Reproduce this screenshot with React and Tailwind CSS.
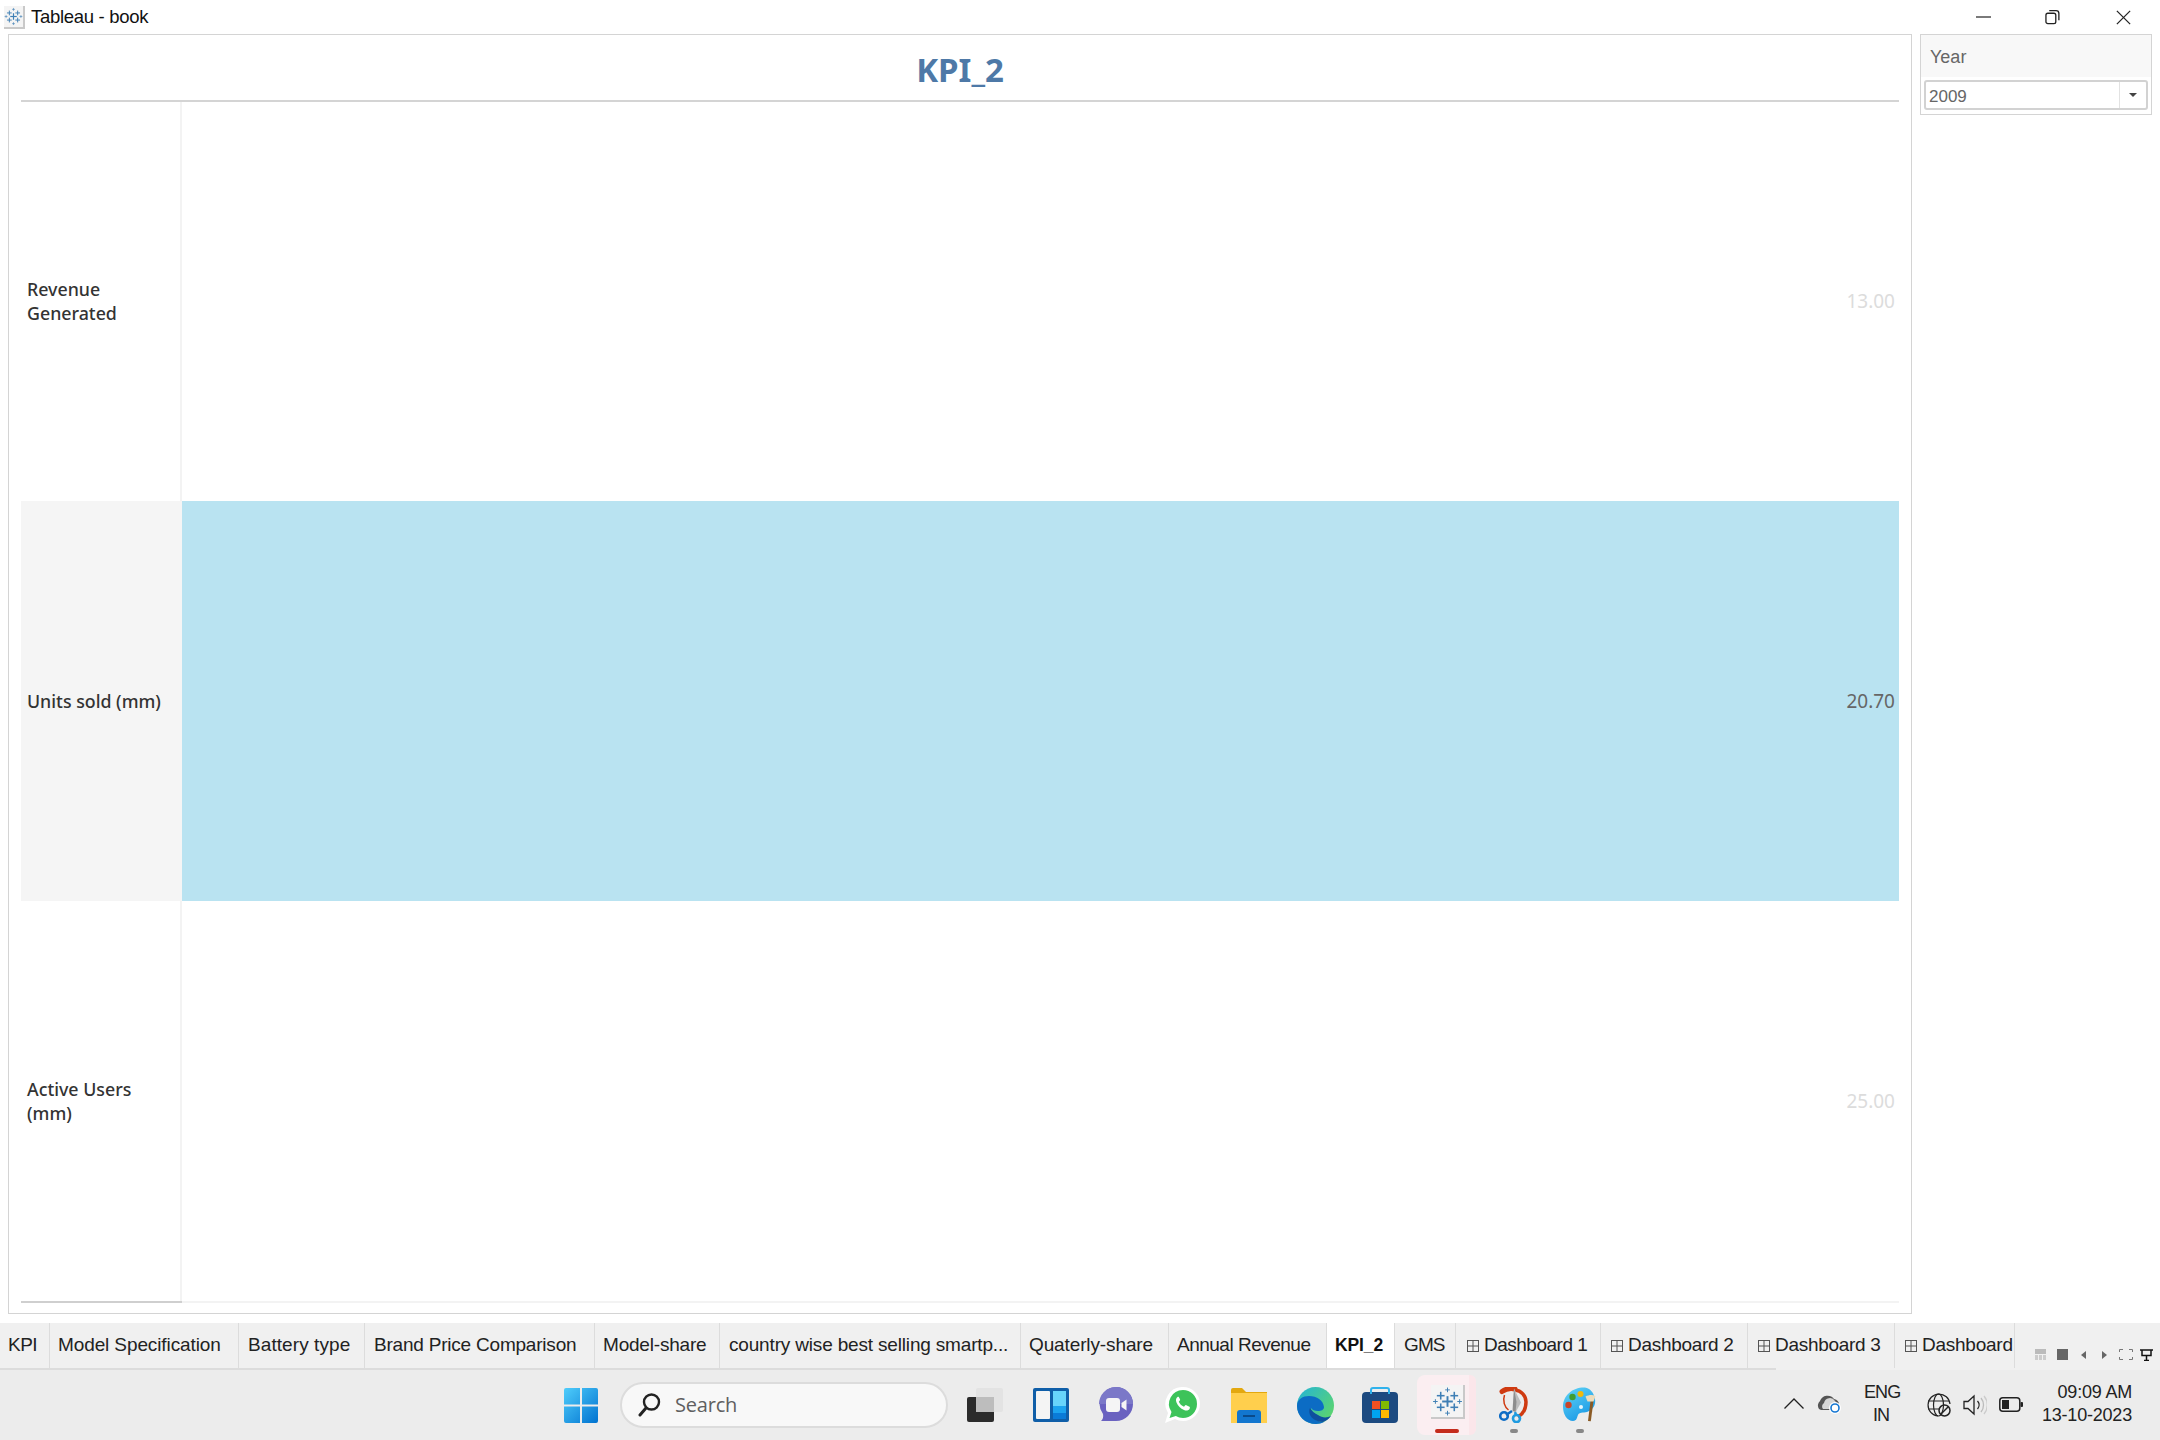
import React from "react";

const TableauMark = ({ size = 26, color = "#3f7fb5" }) => {
  const c = (x, y, r, w) => (
    <g key={`${x}-${y}`} stroke={color} strokeWidth={w}>
      <line x1={x - r} y1={y} x2={x + r} y2={y} />
      <line x1={x} y1={y - r} x2={x} y2={y + r} />
    </g>
  );
  return (
    <svg width={size} height={size} viewBox="0 0 32 32">
      {c(16, 16, 5.5, 2)}
      {c(9, 10, 4, 1.6)}
      {c(23, 10, 4, 1.6)}
      {c(9, 22, 4, 1.6)}
      {c(23, 22, 4, 1.6)}
      {c(16, 4, 2.4, 1)}
      {c(16, 28, 2.4, 1)}
      {c(3.5, 16, 2.4, 1)}
      {c(28.5, 16, 2.4, 1)}
    </svg>
  );
};

const Tile = ({ cls, children }) => (
  <div className={`flex items-center justify-center bg-[#f4f4f4] border-r-2 border-b-2 border-[#c9c9c9] ${cls}`}>
    {children}
  </div>
);

const DashIcon = () => (
  <svg width="12" height="12" viewBox="0 0 12 12" className="shrink-0 mr-[5px]" fill="none" stroke="#555" strokeWidth="1">
    <rect x="0.5" y="0.5" width="11" height="11" />
    <line x1="6" y1="0" x2="6" y2="12" />
    <line x1="0" y1="6" x2="12" y2="6" />
  </svg>
);

const tabs = [
  { t: "KPI", w: 50, p: 8, c: "tracking-[-0.5px]" },
  { t: "Model Specification", w: 189, p: 8, c: "tracking-[-0.11px]" },
  { t: "Battery type", w: 126, p: 9, c: "tracking-[0.08px]" },
  { t: "Brand Price Comparison", w: 230, p: 9, c: "tracking-[-0.21px]" },
  { t: "Model-share", w: 125, p: 8, c: "tracking-[-0.2px]" },
  { t: "country wise best selling smartp...", w: 301, p: 9, c: "tracking-[-0.17px]" },
  { t: "Quaterly-share", w: 148, p: 8, c: "tracking-[-0.12px]" },
  { t: "Annual Revenue", w: 158, p: 8, c: "tracking-[-0.5px]" },
  { t: "KPI_2", w: 68, p: 8, active: true, c: "tracking-[-0.1px]" },
  { t: "GMS", w: 61, p: 9, c: "tracking-[-0.9px]" },
  { t: "Dashboard 1", w: 145, p: 11, d: true, c: "tracking-[-0.5px]" },
  { t: "Dashboard 2", w: 147, p: 10, d: true, c: "tracking-[-0.3px]" },
  { t: "Dashboard 3", w: 147, p: 10, d: true, c: "tracking-[-0.3px]" },
  { t: "Dashboard", w: 120, p: 10, d: true, c: "tracking-[-0.25px]" },
];

const Row = ({ label, value, highlight, h }) => (
  <div className="flex" style={{ height: h }}>
    <div
      className={`w-[161px] shrink-0 flex items-center pl-[6px] pr-2 pb-[1px] text-[17.8px] leading-[24px] font-medium text-[#333] font-['Noto_Sans',sans-serif] ${
        highlight ? "bg-[#f5f5f5]" : "border-r-2 border-[#f3f3f3]"
      }`}
    >
      <div className={highlight ? "" : "w-[110px]"}>{label}</div>
    </div>
    <div
      className={`flex-1 flex items-center justify-end pr-[4px] text-[19px] font-['Noto_Sans',sans-serif] ${
        highlight ? "bg-[#b9e3f1] text-[#666]" : "text-[#dcdcdc]"
      }`}
    >
      {value}
    </div>
  </div>
);

export default function App() {
  return (
    <div className="w-[2160px] h-[1440px] flex flex-col bg-white overflow-hidden font-['Liberation_Sans',sans-serif]">
      {/* title bar */}
      <div className="h-[34px] shrink-0 flex items-center">
        <Tile cls="ml-[4px] w-[21px] h-[23px]">
          <TableauMark size={19} />
        </Tile>
        <span className="ml-[6px] text-[18.5px] tracking-[-0.3px] text-[#111]">Tableau - book</span>
        <div className="ml-auto flex items-center">
          <svg width="15" height="16" viewBox="0 0 15 16" className="mr-[54px]">
            <line x1="0" y1="8" x2="15" y2="8" stroke="#222" strokeWidth="1.2" />
          </svg>
          <svg width="15" height="16" viewBox="0 0 16 16" className="mr-[56px]" fill="none" stroke="#222" strokeWidth="1.4">
            <rect x="1" y="4" width="10.5" height="11" rx="2" />
            <path d="M4.5 1.2h7.3a3 3 0 0 1 3 3v7.3" />
          </svg>
          <svg width="15" height="15" viewBox="0 0 17 17" className="mr-[29px]" stroke="#222" strokeWidth="1.4">
            <line x1="1" y1="1" x2="16" y2="16" />
            <line x1="16" y1="1" x2="1" y2="16" />
          </svg>
        </div>
      </div>

      {/* main */}
      <div className="h-[1289px] shrink-0 flex items-start pl-[8px]">
        <div className="w-[1904px] h-[1280px] border border-[#d4d4d4] pl-[12px] pr-[12px] flex flex-col">
          <div className="h-[67px] shrink-0 border-b-2 border-[#d4d4d4] flex items-center justify-center pt-[5px] text-[33px] font-bold text-[#4e79a7] font-['Noto_Sans',sans-serif]">
            KPI_2
          </div>
          <Row h={399} label="Revenue Generated" value="13.00" />
          <Row h={400} label="Units sold (mm)" value="20.70" highlight />
          <Row h={400} label="Active Users (mm)" value="25.00" />
          <div className="flex">
            <div className="w-[161px] h-[2px] bg-[#cfcfcf]" />
            <div className="flex-1 h-[2px] bg-[#f3f3f3]" />
          </div>
        </div>
        <div className="ml-[8px] w-[232px] h-[81px] border border-[#d4d4d4] flex flex-col">
          <div className="h-[42px] shrink-0 bg-[#f8f8f8] pl-[9px] pt-[5px] text-[18px] leading-[34px] text-[#666]">
            Year
          </div>
          <div className="mt-[3px] mx-[3px] h-[30px] flex border-2 border-[#d2d2d2] rounded-[3px] text-[17px] text-[#666]">
            <div className="flex-1 flex items-center pl-[3px] pt-[3px] border-r border-[#e2e2e2]">2009</div>
            <div className="w-[26px] flex items-center justify-center">
              <div className="w-0 h-0 border-l-[4px] border-r-[4px] border-t-[4px] border-l-transparent border-r-transparent border-t-[#444]" />
            </div>
          </div>
        </div>
      </div>

      {/* tab strip */}
      <div className="h-[47px] shrink-0 flex relative bg-[#f0f0f0]">
        <div className="flex">
          {tabs.map((t) => (
            <div
              key={t.t}
              style={{ width: t.w, paddingLeft: t.p }}
              className={`h-[45px] flex items-center whitespace-nowrap overflow-hidden border-r border-[#dcdcdc] ${t.c} ${
                t.active ? "bg-white font-bold text-[#111] text-[17.5px]" : "text-[#222] text-[19px]"
              }`}
            >
              {t.d && <DashIcon />}
              {t.t}
            </div>
          ))}
        </div>
        <div className="flex items-start pt-[26px] ml-[20px]">
          <svg width="11" height="11" viewBox="0 0 11 11" className="mr-[11px]">
            <rect width="11" height="5" fill="#bbb" />
            <rect y="6" width="3" height="5" fill="#ccc" />
            <rect x="4" y="6" width="3" height="5" fill="#ccc" />
            <rect x="8" y="6" width="3" height="5" fill="#ccc" />
          </svg>
          <div className="w-[11px] h-[11px] bg-[#666] mr-[13px]" />
          <div className="w-0 h-0 mt-[2px] border-y-[4px] border-y-transparent border-r-[5px] border-r-[#666] mr-[16px]" />
          <div className="w-0 h-0 mt-[2px] border-y-[4px] border-y-transparent border-l-[5px] border-l-[#666] mr-[12px]" />
          <svg width="14" height="11" viewBox="0 0 14 11" className="mr-[7px]" fill="none" stroke="#777" strokeWidth="1">
            <path d="M0.5 3V0.5H4M10 0.5h3.5V3M13.5 8v2.5H10M4 10.5H0.5V8" />
          </svg>
          <svg width="13" height="12" viewBox="0 0 13 12" fill="none" stroke="#111" strokeWidth="1.5">
            <path d="M0 1h13M2 1.500v5h9v-5M6.500 6.500V12M4 11.500h5" />
          </svg>
        </div>
        <div className="absolute left-0 bottom-0 w-[1776px] h-[2px] bg-[#dcdcdc]" />
      </div>

      {/* task bar */}
      <div className="h-[70px] shrink-0 flex items-center bg-[#ececec] relative">
        <svg width="34" height="35" viewBox="0 0 34 35" className="ml-[564px] shrink-0">
          <defs>
            <linearGradient id="w" x1="0" y1="0" x2="1" y2="1">
              <stop offset="0" stopColor="#4fcdfb" />
              <stop offset="1" stopColor="#0072d0" />
            </linearGradient>
          </defs>
          <path d="M0 2a2 2 0 0 1 2-2h14v16.500H0zM18 0h14a2 2 0 0 1 2 2v14.500H18zM0 18.500h16V35H2a2 2 0 0 1-2-2zM18 18.500h16V33a2 2 0 0 1-2 2H18z" fill="url(#w)" />
        </svg>

        <div className="ml-[22px] w-[328px] h-[46px] shrink-0 rounded-full bg-[#f8f8f8] border-2 border-[#dcdcdc] flex items-center pl-[16px] text-[20px] tracking-[-0.2px] text-[#5f5f5f] font-['Open_Sans',sans-serif]">
          <svg width="23" height="26" viewBox="0 0 23 26" fill="none" stroke="#222" strokeWidth="2.400" className="mr-[14px]">
            <circle cx="13.500" cy="10" r="7.500" />
            <line x1="8" y1="16" x2="2" y2="23" strokeLinecap="round" strokeWidth="3" />
          </svg>
          Search
        </div>

        <svg width="36" height="34" viewBox="0 0 36 34" className="ml-[19px] shrink-0">
          <rect x="0" y="9" width="27" height="25" rx="2" fill="#2b2b2b" />
          <rect x="9" y="0" width="27" height="24" rx="2" fill="#e3e3e3" />
          <rect x="9" y="9" width="18" height="15" fill="#bdbdbd" />
        </svg>

        <svg width="36" height="34" viewBox="0 0 36 34" className="ml-[30px] shrink-0">
          <rect width="36" height="34" rx="2" fill="#0f5ea8" />
          <rect x="3" y="3" width="14" height="28" rx="1" fill="#f4f4f4" />
          <rect x="20" y="3" width="13" height="15" fill="#67d4fb" />
          <rect x="20" y="18" width="13" height="7" fill="#1ca3ef" />
          <rect x="20" y="25" width="13" height="6" fill="#0a7bd8" />
        </svg>

        <svg width="34" height="36" viewBox="0 0 34 36" className="ml-[30px] shrink-0">
          <path d="M17 0a17 17 0 0 1 0 34H2c2-2 2.500-4 2-7A17 17 0 0 1 17 0z" fill="#6a62c0" />
          <path d="M17 0a17 17 0 0 1 17 17H0A17 17 0 0 1 17 0z" fill="#7b78c8" />
          <rect x="7" y="11" width="14" height="14" rx="3" fill="#f5f5f5" />
          <path d="M22.500 16l5-3.500v11l-5-3.500z" fill="#f5f5f5" />
        </svg>

        <svg width="36" height="36" viewBox="0 0 36 36" className="ml-[32px] shrink-0">
          <path d="M18 0a17 17 0 0 1 0 34c-3 0-5.500-.7-8-2L0 36l3-10A17 17 0 0 1 18 0z" fill="#fff" />
          <path d="M18 3a14 14 0 0 1 0 28c-2.700 0-5-.7-7.200-2L4.500 31l2-6A14 14 0 0 1 18 3z" fill="#3dc35a" />
          <path d="M12.500 10c-1.500 1-2 3 -1 5.500 1.500 3.500 4 6 7.500 7.500 2.500 1 4.500.5 5.500-1 .5-1 .5-2 0-2.300l-3.200-1.500c-.6-.2-1 0-1.300.4l-1 1.200c-2.500-1-4.200-2.800-5.200-5l1-1.200c.4-.4.4-.9.200-1.300L13.800 10c-.3-.4-.9-.4-1.300 0z" fill="#fff" />
        </svg>

        <svg width="36" height="35" viewBox="0 0 36 35" className="ml-[30px] shrink-0">
          <path d="M0 2a2 2 0 0 1 2-2h9l4 4h21v31H0z" fill="#e3a80f" />
          <rect y="5" width="36" height="30" fill="#ffcf4d" />
          <path d="M6 35V25a3 3 0 0 1 3-3h18a3 3 0 0 1 3 3v10z" fill="#1276cf" />
          <rect x="12" y="27" width="12" height="2" fill="#0a4a8a" />
        </svg>

        <svg width="37" height="37" viewBox="0 0 37 37" className="ml-[30px] shrink-0">
          <defs>
            <linearGradient id="e1" x1="0" y1="0" x2="1" y2="0.8">
              <stop offset="0" stopColor="#23b4d8" />
              <stop offset="1" stopColor="#5ed66a" />
            </linearGradient>
          </defs>
          <circle cx="18.500" cy="18.500" r="18.500" fill="url(#e1)" />
          <path d="M0 19C0 12 6 9 12 9c8 0 14 4 15 11 0 3-3 4-6 4-3 0-6-1-7-3-2 4 0 9 5 12 2 1 5 2 8 2-2 1-5 2-8 2C8 37 0 29 0 19z" fill="#0c6cc4" />
          <path d="M13 21c-2 4 0 9 5 12 2 1 5 2 8 2 3-1 6-3 8-6-4 2-9 2-13-1-4-2-6-4-8-7z" fill="#0f4f9e" />
        </svg>

        <svg width="36" height="36" viewBox="0 0 36 36" className="ml-[28px] shrink-0">
          <rect y="5" width="36" height="31" rx="4" fill="#1c4a80" />
          <path d="M9 7V3a2 2 0 0 1 2-2h14a2 2 0 0 1 2 2v4" fill="none" stroke="#2fb2ec" strokeWidth="2" />
          <rect x="10" y="14" width="8" height="8" fill="#f25022" />
          <rect x="19" y="14" width="8" height="8" fill="#7fba00" />
          <rect x="10" y="23" width="8" height="8" fill="#00a4ef" />
          <rect x="19" y="23" width="8" height="8" fill="#ffb900" />
        </svg>

        <div className="ml-[19px] w-[59px] h-[60px] shrink-0 flex relative">
          <div className="w-[52px] h-[60px] rounded-l-[8px] bg-[#fbeef1] flex items-center justify-center">
            <Tile cls="w-[34px] h-[34px] ml-[10px] mb-[6px]">
              <TableauMark size={31} />
            </Tile>
          </div>
          <div className="w-[7px] h-[60px] rounded-r-[6px] bg-[#fbe6ea]" />
          <div className="absolute left-[18px] bottom-[2px] w-[24px] h-[4px] rounded-full bg-[#c42b1c]" />
        </div>

        {/* snipping tool */}
        <div className="ml-[23px] w-[30px] h-[60px] shrink-0 flex flex-col items-center relative">
          <svg width="30" height="36" viewBox="0 0 30 36" className="mt-[12px]">
            <path d="M3 4.500C8 1 12 1 16 2" fill="none" stroke="#cf3a10" strokeWidth="5" strokeLinecap="round" />
            <path d="M16 3a12 12 0 0 1 11 12c0 7-3 12-8 15" fill="none" stroke="#cf3a10" strokeWidth="3.500" />
            <path d="M5.500 8c-2 6 0 12 4 15" fill="none" stroke="#cf3a10" strokeWidth="1.500" />
            <path d="M15 1.500l7 14-5 9-3-1z" fill="#bdbdbd" />
            <path d="M15 1.500l-1.500 22.500 3 1 1-10z" fill="#8d8d8d" />
            <path d="M13 24L7 28" stroke="#0d6cc5" strokeWidth="2.500" />
            <path d="M16 25l1 3" stroke="#1f9be0" strokeWidth="2.500" />
            <circle cx="5" cy="29" r="3.800" fill="none" stroke="#0d6cc5" strokeWidth="2.600" />
            <circle cx="17.500" cy="31.500" r="3.500" fill="none" stroke="#1f9be0" strokeWidth="2.600" />
          </svg>
          <div className="absolute bottom-[2px] w-[8px] h-[4px] rounded-full bg-[#888]" />
        </div>

        {/* paint */}
        <div className="ml-[34px] w-[34px] h-[60px] shrink-0 flex flex-col items-center relative">
          <svg width="34" height="36" viewBox="0 0 34 36" className="mt-[12px]">
            <defs>
              <linearGradient id="p1" x1="0.2" y1="0" x2="0.8" y2="1">
                <stop offset="0" stopColor="#5cd0f5" />
                <stop offset="1" stopColor="#1494e4" />
              </linearGradient>
            </defs>
            <path d="M22 0.500C10 0 0 8 0 20c0 7 4 14 10 14 4 0 4-4 5-6 1-3 5-2 9-3 6-2 9-7 8-13-1-6-5-11-10-11.500z" fill="url(#p1)" />
            <circle cx="9.500" cy="10" r="3.200" fill="#3f9e34" />
            <circle cx="17.500" cy="7" r="3" fill="#f0b90b" />
            <circle cx="5.500" cy="18" r="3.200" fill="#c8452a" />
            <circle cx="18" cy="20" r="2" fill="#e4f6fd" />
            <path d="M27.500 14l-2.500 20 2.800.2L30.500 14z" fill="#8a5a24" />
            <path d="M22.500 9.500c3-1.500 7-2 10-.5l-2 5.500h-6z" fill="#ecdcbc" />
          </svg>
          <div className="absolute bottom-[2px] w-[8px] h-[4px] rounded-full bg-[#888]" />
        </div>

        {/* tray */}
        <svg width="20" height="11" viewBox="0 0 20 11" className="ml-[187px] shrink-0 mb-[3px]" fill="none" stroke="#222" strokeWidth="1.300">
          <path d="M0.500 10.500L10 1l9.500 9.500" />
        </svg>
        <svg width="25" height="20" viewBox="0 0 25 20" className="ml-[13px] shrink-0 mb-[3px]">
          <path d="M2 15a6 6 0 0 1 1-8 8 8 0 0 1 14-2 6 6 0 0 1 5 6v5H4z" fill="#555" />
          <path d="M6 15a4 4 0 0 1 1-6 6 6 0 0 1 11-2 4 4 0 0 1 2 4v4z" fill="#d6d6d6" />
          <circle cx="18" cy="14" r="6" fill="#fff" />
          <circle cx="18" cy="14" r="4" fill="none" stroke="#1677d2" strokeWidth="1.600" />
        </svg>
        <div className="ml-[22px] w-[34px] shrink-0 mb-[3px] text-center text-[18px] leading-[23px] tracking-[-0.9px] text-[#222]">
          ENG
          <br />
          IN
        </div>
        <svg width="24" height="24" viewBox="0 0 24 24" className="ml-[29px] shrink-0 mb-[1px]" fill="none" stroke="#222" strokeWidth="1.200">
          <path d="M23 11A11 11 0 1 0 11 23" />
          <ellipse cx="11.500" cy="12" rx="5" ry="11" />
          <path d="M1 8h21M1 16h11" />
          <circle cx="17.500" cy="17.500" r="5.500" strokeWidth="1.500" />
          <line x1="14" y1="21" x2="21" y2="14" strokeWidth="1.500" />
        </svg>
        <svg width="24" height="24" viewBox="0 0 24 24" className="ml-[12px] shrink-0 mb-[1px]" fill="none" stroke="#222" strokeWidth="1.300">
          <path d="M1 8.500h4L11 3v18l-6-5.500H1z" />
          <path d="M14.500 8a6 6 0 0 1 0 8" />
          <path d="M18 5a11 11 0 0 1 0 14" stroke="#bbb" />
          <path d="M21 3a14 14 0 0 1 0 18" stroke="#ccc" />
        </svg>
        <svg width="24" height="15" viewBox="0 0 24 15" className="ml-[12px] shrink-0 mb-[1px]">
          <rect x="0.800" y="0.800" width="20" height="13.400" rx="3" fill="none" stroke="#222" strokeWidth="1.500" />
          <rect x="3" y="3" width="7" height="9" fill="#222" />
          <rect x="21.500" y="5" width="2.500" height="5" rx="1" fill="#222" />
        </svg>
        <div className="ml-auto mr-[28px] mb-[3px] shrink-0 text-right text-[18px] leading-[23px] tracking-[-0.2px] text-[#222]">
          09:09 AM
          <br />
          13-10-2023
        </div>
      </div>
    </div>
  );
}
